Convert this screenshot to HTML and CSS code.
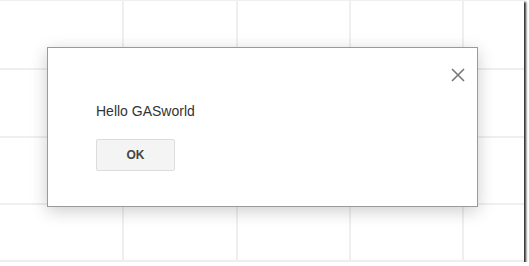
FILE: index.html
```html
<!DOCTYPE html>
<html lang="en">
<head>
    <meta charset="UTF-8">
    <title>Hello GASworld</title>
    <link rel="stylesheet" href="styles.css">
</head>
<body>

<div class="shot">
    <div class="sheet">
        <div class="cell"></div><div class="cell"></div><div class="cell"></div><div class="cell"></div><div class="cell"></div><div class="cell"></div>
        <div class="cell"></div><div class="cell"></div><div class="cell"></div><div class="cell"></div><div class="cell"></div><div class="cell"></div>
        <div class="cell"></div><div class="cell"></div><div class="cell"></div><div class="cell"></div><div class="cell"></div><div class="cell"></div>
        <div class="cell"></div><div class="cell"></div><div class="cell"></div><div class="cell"></div><div class="cell"></div><div class="cell"></div>
    </div>

    <div class="dialog">
        <button class="dialog-close" title="Close">
            <svg width="14" height="14" viewBox="0 0 14 14">
                <path d="M1 1 L13 13 M13 1 L1 13" stroke="#777" stroke-width="1.6" fill="none"/>
            </svg>
        </button>
        <div class="dialog-body">Hello GASworld</div>
        <div class="dialog-buttons">
            <button class="btn">OK</button>
        </div>
    </div>
</div>

</body>
</html>
```

FILE: styles.css
```css
body, html {
    margin: 0;
    padding: 0;
    background-color: #fff;
    font-family: "Liberation Sans", Arial, sans-serif;
    overflow: hidden;
}
.shot {
    position: relative;
    width: 524px;
    height: 262px;
    background-color: #fff;
    box-shadow: 2px 2px 2px #2e2e2e;
    overflow: hidden;
}
.sheet {
    display: grid;
    grid-template-columns: 124px 114px 113px 113px 113px 1fr;
    grid-template-rows: 69px 68px 67px 1fr;
    height: 100%;
    border-top: 1px solid #efefef;
    box-sizing: border-box;
}
.cell {
    border-right: 2px solid #efefef;
    border-bottom: 2px solid #efefef;
}
.dialog {
    position: absolute;
    left: 47px;
    top: 47px;
    width: 431px;
    box-sizing: border-box;
    padding: 55px 48px 35px 48px;
    background-color: #fff;
    border: 1px solid #9a9a9a;
    box-shadow: 0 4px 16px rgba(0, 0, 0, 0.2);
}
.dialog-close {
    position: absolute;
    top: 20px;
    right: 12px;
    padding: 0;
    border: none;
    background: none;
    width: 14px;
    height: 14px;
    line-height: 0;
    cursor: pointer;
}
.dialog-body {
    font-size: 14px;
    line-height: 17px;
    color: #333;
}
.dialog-buttons {
    margin-top: 19px;
    display: flex;
}
.btn {
    width: 79px;
    height: 32px;
    padding: 0;
    font-family: "Liberation Sans", Arial, sans-serif;
    font-size: 12px;
    font-weight: bold;
    color: #444;
    background-color: #f4f4f4;
    border: 1px solid #dcdcdc;
    border-radius: 2px;
}
```
